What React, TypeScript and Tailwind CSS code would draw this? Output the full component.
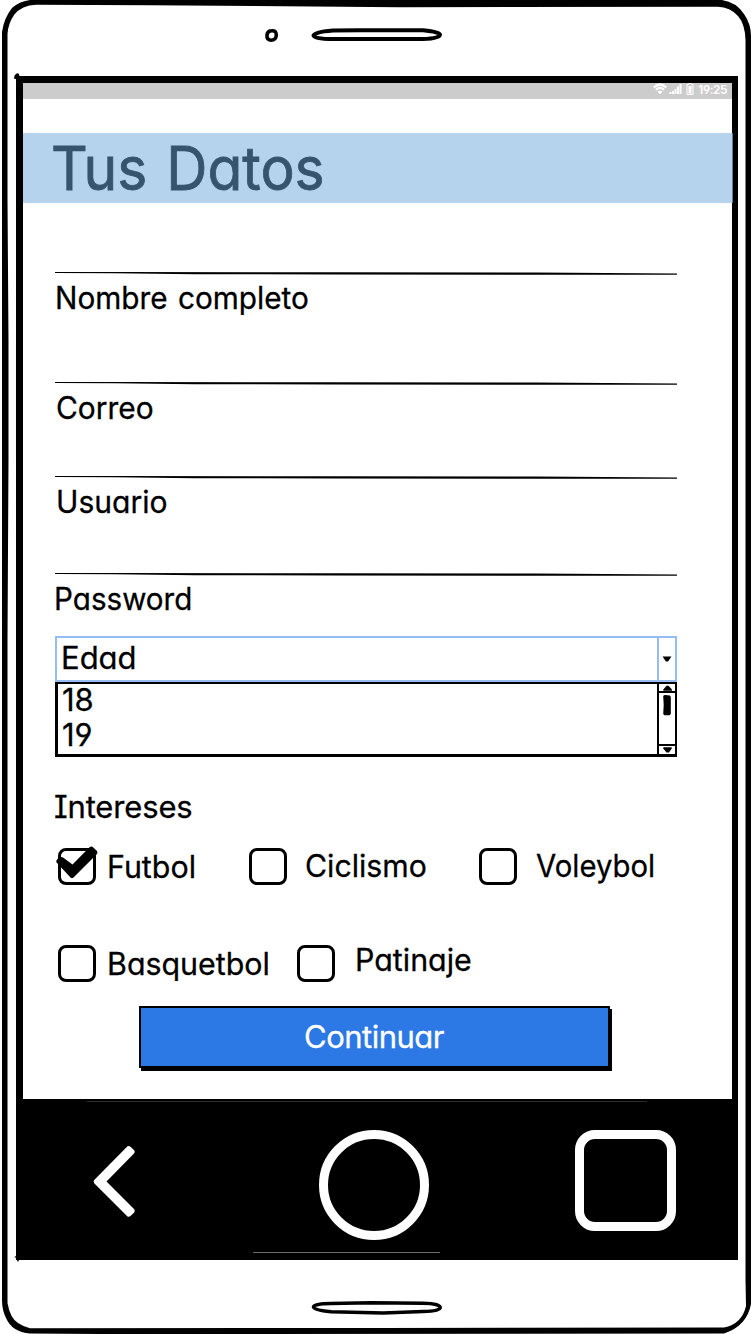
import type { ReactNode } from "react";

const font =
  "font-['Inter','Open_Sans',sans-serif] [font-feature-settings:'cv11','cv08','cv04'] whitespace-nowrap";

const label = "text-[31px] leading-[40px] [-webkit-text-stroke:0.3px_currentColor]";

function FieldLine() {
  return (
    <svg className="block h-[4px] w-[623px]" viewBox="0 0 623 4">
      <path d="M0 0.1 L70 0 L280 0.3 L480 0.5 L622 1.6 L622 2.7 L480 2.7 L280 2.4 L140 2.2 L60 1.3 L0 0.9Z" fill="#000" />
    </svg>
  );
}

function Field({ name, className, text }: { name: string; className: string; text: string }) {
  return (
    <div className={className}>
      <FieldLine />
      <div className={`mt-[2px] origin-left ${label} ${text}`}>{name}</div>
    </div>
  );
}

function Check({
  checked = false,
  className,
  text,
  children,
}: {
  checked?: boolean;
  className: string;
  text: string;
  children: ReactNode;
}) {
  return (
    <label className={`flex items-start ${className}`}>
      <span className="relative block h-[37px] w-[38px] shrink-0 rounded-[8px] border-[3px] border-black">
        {checked && (
          <svg className="absolute -left-[5px] -top-[5px] h-[34px] w-[42px]" viewBox="0 0 42 34">
            <path
              d="M0.600 16.500 Q-0.400 15 1.500 13 Q4.500 10 7 11.500 L16.500 18.500 L33.500 1.200 Q35.500 -0.300 37 1.200 L41 5 Q42 7 40.500 8.500 L17.500 31.500 Q16 32.500 14.500 31.500Z"
              fill="#000"
            />
          </svg>
        )}
      </span>
      <span className={`origin-left ${label} ${text}`}>{children}</span>
    </label>
  );
}

function PhoneOutline() {
  return (
    <svg className="pointer-events-none absolute inset-0 h-[1334px] w-[751px]" viewBox="0 0 751 1334">
      <path
        fillRule="evenodd"
        fill="#000"
        d="M30 0 L722 0 Q736 2 744 14 Q751 24 751 36 L751 1304 Q747 1326 724 1333.500 L100 1334 L30 1333.500 Q12 1332 6 1318 Q2 1310 2 1300 L2 32 Q4 18 12 8 Q20 1 30 0Z
        M36 4.800 Q22 5 14 15 Q8 24 7.500 34 L7.500 200 L8.500 340 L8.500 460 L7.500 640 L7.500 1303 Q10 1318 18 1323 Q24 1327 30 1328.300 L380 1328 L724 1327.500 Q742 1324 746 1306 L745.500 1280 L745.500 40 Q745 24 738 16 Q730 7 718 6.700 L400 7.300 L150 5.200Z"
      />
      <path d="M15 75 Q17 72 19 74 L20 79 L14.500 79 Q13.500 77 15 75Z M14.500 1256 L18 1262 L20 1258Z" fill="#000" />
    </svg>
  );
}

function Slot({ className }: { className: string }) {
  return (
    <svg className={className} viewBox="0 0 132 15" fill="none" stroke="#000" strokeWidth="4">
      <path d="M22 2.500 L50 2.300 L112 2.300 Q129 4 129 6.500 Q129 10.500 112 11 L22 11 Q3 11 2.500 7.500 Q3 4 22 2.500Z" />
    </svg>
  );
}

function BottomSlot({ className }: { className: string }) {
  return (
    <svg className={className} viewBox="0 0 132 16" fill="none" stroke="#000" strokeWidth="3.600">
      <path d="M20 3.500 L60 2.800 L112 3.300 Q129 3.500 129.200 7.500 Q129 11.300 112 11.500 L72 13 L20 11.800 Q3 10 2.500 7 Q3 3.500 20 3.500Z" />
    </svg>
  );
}

export default function App() {
  return (
    <main className={`relative flex h-[1334px] w-[751px] flex-col overflow-hidden bg-white text-black ${font}`}>
      <PhoneOutline />
      <header className="flex h-[76px] shrink-0 pl-[264px] pt-[28px]">
        <svg className="h-[14px] w-[15px]" viewBox="0 0 15 14">
          <path
            d="M7.500 2.800 Q12.500 2.200 12.300 7.300 Q12 12.200 7 12.200 Q2.500 11.700 3 7 Q3.500 2.800 7.500 2.800Z"
            fill="none"
            stroke="#000"
            strokeWidth="3.600"
          />
        </svg>
        <Slot className="ml-[32px] h-[15px] w-[132px]" />
      </header>

      <section className="ml-[16px] flex h-[1184px] w-[722px] shrink-0 flex-col border-b-[7px] border-l-[7px] border-r-[6px] border-t-[7px] border-black">
        <div className="flex h-[16px] shrink-0 items-start justify-end bg-[#cccccc] pr-[5px] text-white">
          <svg className="mr-[1px] h-[14px] w-[44px]" viewBox="0 0 44 14">
            <g fill="none" stroke="#fff" strokeWidth="2.200">
              <path d="M0.800 4.500 Q7 -1.500 13.200 4.500" />
              <path d="M3 6.800 Q7 3 11 6.800" />
            </g>
            <path d="M4.500 8.800 Q7 6.800 9.500 8.800 L7 11.300Z" fill="#fff" />
            <path d="M16.500 9h2v2h-2zM19 8h2v3h-2zM21.500 6h2v5h-2zM24 3.500h2v7.500h-2zM26.500 1h2v10h-2z" fill="#fff" />
            <path d="M34 1.500h1.500v-1h3v1h1.500v10h-6z" fill="none" stroke="#fff" />
            <path d="M35.500 3h3v7.500h-3z" fill="#fff" />
          </svg>
          <span className="text-[12px] font-semibold leading-[14px] tracking-[-0.5px]">19:25</span>
        </div>

        <div className="relative z-10 mt-[34px] flex h-[70px] w-[710px] shrink-0 border-r border-[#5a7f9f] bg-[#b6d3ee] pl-[28px] text-[#36546e]">
          <h1 className="origin-left scale-x-[0.95] text-[60px] font-normal leading-[71px] [-webkit-text-stroke:0.8px_currentColor] [word-spacing:3px]">
            Tus Datos
          </h1>
        </div>

        <form className="mt-[69px] flex flex-col pl-[32px]">
          <Field name="Nombre completo" className="h-[110px]" text="scale-x-[0.96] [word-spacing:2px]" />
          <Field name="Correo" className="h-[94px]" text="ml-[1px] scale-x-[0.965]" />
          <Field name="Usuario" className="h-[97px]" text="ml-[1px] scale-x-[0.97]" />
          <Field name="Password" className="h-[63px]" text="-ml-[1px] scale-x-[0.955]" />

          <div className="flex h-[46px] w-[622px] border-2 border-[#96bcf4]">
            <div className={`grow pl-[4px] ${label}`}>Edad</div>
            <div className="flex w-[18px] items-center justify-center border-l-2 border-[#96bcf4]">
              <svg className="h-[6px] w-[10px]" viewBox="0 0 10 6">
                <path d="M0.500 0.500h9L6 5.500H4Z" fill="#000" />
              </svg>
            </div>
          </div>
          <div className="flex h-[75px] w-[622px] border-b-[3px] border-l-[3px] border-r-[2px] border-t-[2px] border-black">
            <div className="-mt-[2px] grow pl-[4px] text-[31px] leading-[35px] [-webkit-text-stroke:0.3px_currentColor]">
              <div>18</div>
              <div>19</div>
            </div>
            <div className="flex w-[18px] flex-col border-l-2 border-black">
              <div className="flex h-[9px] items-center justify-center border-b-2 border-black">
                <svg className="h-[6px] w-[9px]" viewBox="0 0 9 6">
                  <path d="M0.300 5.800V4.500L3.500 0.800h2L9 4.500v1.300z" fill="#000" />
                </svg>
              </div>
              <div className="flex grow justify-center">
                <svg className="mt-[1px] h-[22px] w-[8px]" viewBox="0 0 8 22">
                  <path d="M0.200 2Q1 1 2 1L7 1.500L7.800 3V20L6.500 21.200H1.500L0.200 20L0.700 11Z" fill="#000" />
                </svg>
              </div>
              <div className="flex h-[10px] items-center justify-center border-t-2 border-black">
                <svg className="h-[6px] w-[9px]" viewBox="0 0 9 6">
                  <path d="M0.300 0.300h8.400v1.200L6 5.500H3.500L0.300 1.500z" fill="#000" />
                </svg>
              </div>
            </div>
          </div>

          <div className={`-ml-[1px] mt-[30px] tracking-[-0.15px] ${label}`}>Intereses</div>
          <div className="mt-[21px] flex h-[97px] pl-[3px]">
            <Check checked className="w-[191px]" text="-mt-[1px] ml-[11px] scale-x-[0.98]">
              Futbol
            </Check>
            <Check className="w-[230px]" text="-mt-[2px] ml-[18px] scale-x-[0.975]">
              Ciclismo
            </Check>
            <Check className="" text="-mt-[2px] ml-[19px] scale-x-[0.945]">
              Voleybol
            </Check>
          </div>
          <div className="flex h-[61px] pl-[3px]">
            <Check className="w-[239px]" text="-mt-[1px] ml-[11px] scale-x-[0.98]">
              Basquetbol
            </Check>
            <Check className="" text="-mt-[5px] ml-[20px] scale-x-[0.98]">
              Patinaje
            </Check>
          </div>
          <button
            type="button"
            className="ml-[84px] h-[62px] w-[471px] border-2 border-black bg-[#2c78e4] pr-[1px] text-[31px] leading-[40px] tracking-[-0.5px] text-white shadow-[2px_3px_0_#000] [-webkit-text-stroke:0.3px_currentColor]"
          >
            Continuar
          </button>
        </form>

        <nav className="mt-auto flex h-[154px] shrink-0 flex-col bg-black">
          <div className="ml-[64px] mt-[2px] h-px w-[560px] bg-[#2b2b2b]" />
          <div className="flex pl-[70px] pt-[28px]">
            <svg className="mt-[15px] h-[73px] w-[43px]" viewBox="0 0 43 73">
              <path
                d="M34.500 1.300 Q36 0.500 37.500 1.800 L41.200 5.300 Q42.500 7 41 8.500 L13.500 36.500 L41 64 Q42.500 65.800 41.200 67.500 L37.500 71 Q36 72.300 34.500 71.500 L1.200 38.200 Q0 36.500 1.200 35Z"
                fill="#fff"
              />
            </svg>
            <div className="ml-[183px] size-[110px] rounded-full border-[9px] border-white" />
            <div className="ml-[146px] size-[101px] rounded-[20px] border-[9px] border-white" />
          </div>
          <div className="ml-[230px] mt-auto h-px w-[187px] bg-[#6b6b6b]" />
        </nav>
      </section>
      <BottomSlot className="ml-[311px] mt-[40px] h-[16px] w-[132px] shrink-0" />
    </main>
  );
}
